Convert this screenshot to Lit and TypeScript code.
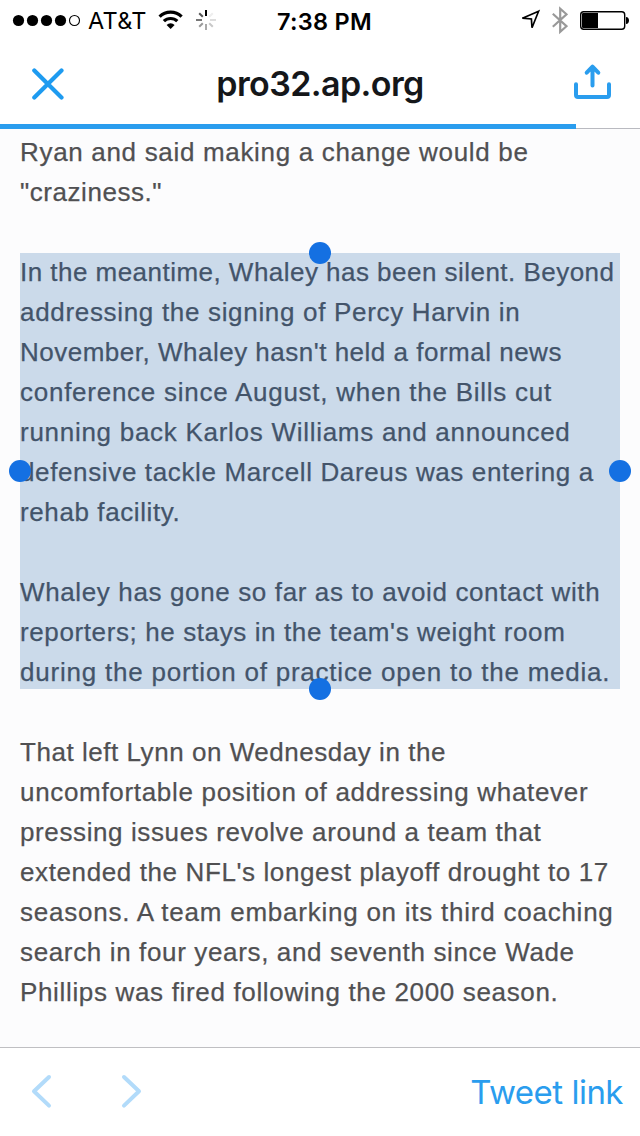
import { LitElement, html, css } from "lit";
import { customElement } from "lit/decorators.js";

interface Line {
  text: string;
  /** letter spacing in px */
  ls: number;
}

const line = (text: string, ls: number): Line => ({ text, ls });

const intro: Line[] = [
  line("Ryan and said making a change would be", 0.68),
  line('"craziness."', 0.55),
];

const selected: Line[][] = [
  [
    line("In the meantime, Whaley has been silent. Beyond", 0.47),
    line("addressing the signing of Percy Harvin in", 0.68),
    line("November, Whaley hasn't held a formal news", 0.5),
    line("conference since August, when the Bills cut", 0.74),
    line("running back Karlos Williams and announced", 0.72),
    line("defensive tackle Marcell Dareus was entering a", 0.63),
    line("rehab facility.", 0.6),
  ],
  [
    line("Whaley has gone so far as to avoid contact with", 0.63),
    line("reporters; he stays in the team's weight room", 0.61),
    line("during the portion of practice open to the media.", 0.78),
  ],
];

const outro: Line[] = [
  line("That left Lynn on Wednesday in the", 0.54),
  line("uncomfortable position of addressing whatever", 0.68),
  line("pressing issues revolve around a team that", 0.61),
  line("extended the NFL's longest playoff drought to 17", 0.61),
  line("seasons. A team embarking on its third coaching", 0.76),
  line("search in four years, and seventh since Wade", 0.64),
  line("Phillips was fired following the 2000 season.", 0.66),
];

const paragraph = (lines: Line[]) => html`<p>
  ${lines.map((l) => html`<span class="line" style="letter-spacing:${l.ls}px">${l.text}</span>`)}
</p>`;

@customElement("status-bar")
class StatusBar extends LitElement {
  static styles = css`
    :host {
      display: grid;
      grid-template-columns: 1fr auto 1fr;
      align-items: center;
      height: 40px;
      box-sizing: border-box;
      padding: 0 11px 0 12px;
      color: #000;
      font-family: Inter, "Liberation Sans", sans-serif;
    }
    .left, .right { display: flex; align-items: center; }
    .right { justify-content: flex-end; }
    svg { display: block; flex: none; }
    .carrier { font-size: 23.5px; letter-spacing: 0.3px; margin-left: 7px; width: 60px; padding-top: 1px; white-space: nowrap; }
    .wifi { margin-left: 10px; }
    .spinner { margin-left: 11px; }
    .time { font-size: 23.5px; font-weight: 600; letter-spacing: 0.3px; padding: 2px 0 0 8px; white-space: nowrap; }
    .bt { margin-left: 10px; }
    .battery { margin-left: 12px; }
  `;

  render() {
    return html`
      <div class="left">
        <svg width="69" height="40" viewBox="12 0 69 40">
          <circle cx="18.500" cy="20.500" r="5.600" />
          <circle cx="32.500" cy="20.500" r="5.600" />
          <circle cx="46.500" cy="20.500" r="5.600" />
          <circle cx="60.500" cy="20.500" r="5.600" />
          <circle cx="74.500" cy="20.500" r="5" fill="none" stroke="#000" stroke-width="1.100" />
        </svg>
        <span class="carrier">AT&amp;T</span>
        <svg class="wifi" width="26" height="40" viewBox="158 0 26 40">
          <g fill="none" stroke="#000" stroke-width="3.200">
            <path d="M159.600 16.600a15.600 15.600 0 0 1 22 0" />
            <path d="M163.900 21.200a9.600 9.600 0 0 1 13.400 0" />
          </g>
          <path d="M166.600 25a5.700 5.700 0 0 1 8 0l-4 4z" />
        </svg>
        <svg class="spinner" width="22" height="40" viewBox="195 0 22 40">
          <g stroke-width="2">
            <path d="M206 10v6" stroke="#000" />
            <path d="M212.800 13.200l-3.600 3.600" stroke="#eee" />
            <path d="M216 20h-6" stroke="#ddd" />
            <path d="M212.800 26.800l-3.600-3.600" stroke="#c8c8c8" />
            <path d="M206 30v-6" stroke="#aaa" />
            <path d="M199.200 26.800l3.600-3.600" stroke="#999" />
            <path d="M196 20h6" stroke="#777" />
            <path d="M199.200 13.200l3.600 3.600" stroke="#555" />
          </g>
        </svg>
      </div>
      <span class="time">7:38 PM</span>
      <div class="right">
        <svg width="22" height="40" viewBox="520 0 22 40">
          <path d="M538.600 11.200l-16.200 7 9 .8.600 8.800z" fill="none" stroke="#000" stroke-width="1.700" />
        </svg>
        <svg class="bt" width="16" height="40" viewBox="552 0 16 40">
          <path d="M552.800 13.800l13.700 12.400-6.300 5.600V8.700l6.300 5.600-13.700 12.400" fill="none" stroke="#999" stroke-width="2.200" />
        </svg>
        <svg class="battery" width="49" height="40" viewBox="580 0 49 40">
          <rect x="580.700" y="11.700" width="44" height="17.600" rx="3" fill="none" stroke="#000" stroke-width="1.400" />
          <path d="M583 13h15v15h-15a1 1 0 0 1-1-1V14a1 1 0 0 1 1-1z" />
          <path d="M626 17c4 0 4 7 0 7z" />
        </svg>
      </div>
    `;
  }
}

@customElement("nav-header")
class NavHeader extends LitElement {
  static styles = css`
    :host {
      display: block;
      height: 89px;
      box-sizing: border-box;
      border-bottom: 1px solid #b9bac0;
      font-family: Inter, "Liberation Sans", sans-serif;
    }
    .row {
      display: grid;
      grid-template-columns: 1fr auto 1fr;
      align-items: center;
      height: 84px;
      padding: 0 29px;
    }
    svg { display: block; }
    .close { margin-left: 3px; }
    .share { justify-self: end; }
    .title { padding-top: 3px; color: #15171a; font-size: 34px; line-height: 40px; font-weight: 600; letter-spacing: -0.6px; white-space: nowrap; }
    .progress { width: 576px; height: 5px; background: #2a9dee; }
  `;

  render() {
    return html`
      <div class="row">
        <svg class="close" width="32" height="84" viewBox="32 40 32 84">
          <path d="M34.300 70.600l27.200 27M61.500 70.600l-27.200 27" stroke="#1e9bf0" stroke-width="4.200" stroke-linecap="round" />
        </svg>
        <span class="title">pro32.ap.org</span>
        <svg class="share" width="38" height="84" viewBox="573 40 38 84" fill="none" stroke="#2a9dee" stroke-width="4" stroke-linecap="round" stroke-linejoin="round">
          <path d="M576 84.300v10.700q0 2 2 2h29q2 0 2-2V84.300M592.500 85.500V67M586.700 72.700l5.800-6 5.800 6" />
        </svg>
      </div>
      <div class="progress"></div>
    `;
  }
}

@customElement("app-root")
class AppRoot extends LitElement {
  static styles = css`
    :host {
      display: flex;
      flex-direction: column;
      width: 640px;
      height: 1136px;
      overflow: hidden;
      background: #fff;
    }
    main {
      flex: 1;
      min-height: 0;
      padding: 3px 20px 0;
      background: #fcfcfd;
      color: #505052;
      font: 26px/40px "Liberation Sans", Arial, sans-serif;
      -webkit-text-stroke: 0.25px currentColor;
    }
    p { margin: 0 0 40px; }
    .line { display: block; white-space: nowrap; }
    .selection {
      position: relative;
      display: flow-root;
      height: 436px;
      margin: 41px 0 43px;
      color: #43546a;
      background: #cbdaea;
    }
    .selection p:first-of-type { margin-top: -1px; }
    .handle { position: absolute; width: 22px; height: 22px; border-radius: 50%; background: #1470e2; transform: translate(-50%, -50%); }
    .top { left: 50%; top: 0; }
    .bottom { left: 50%; top: 100%; }
    .start { left: 0; top: 50%; }
    .end { left: 100%; top: 50%; }
    footer {
      display: flex;
      align-items: center;
      height: 89px;
      box-sizing: border-box;
      padding: 0 17px 0 31px;
      border-top: 1px solid #bfbfc2;
      background: #fff;
    }
    footer svg { display: block; }
    .forward { margin-left: 68px; }
    .tweet { margin-left: auto; padding-bottom: 1px; color: #2a9dee; font: 33px/40px Inter, "Liberation Sans", sans-serif; letter-spacing: -0.5px; white-space: nowrap; }
  `;

  render() {
    return html`
      <status-bar></status-bar>
      <nav-header></nav-header>
      <main>
        ${paragraph(intro)}
        <div class="selection">
          ${selected.map(paragraph)}
          <i class="handle top"></i>
          <i class="handle end"></i>
          <i class="handle bottom"></i>
          <i class="handle start"></i>
        </div>
        ${paragraph(outro)}
      </main>
      <footer>
        <svg width="22" height="88" viewBox="31 1048 22 88" fill="none" stroke="#b2dbfa" stroke-width="4" stroke-linecap="round" stroke-linejoin="round">
          <path d="M49 1077l-15 14.300 15 14.300" />
        </svg>
        <svg class="forward" width="22" height="88" viewBox="121 1048 22 88" fill="none" stroke="#b2dbfa" stroke-width="4" stroke-linecap="round" stroke-linejoin="round">
          <path d="M124 1077l15 14.300-15 14.300" />
        </svg>
        <span class="tweet">Tweet link</span>
      </footer>
    `;
  }
}
